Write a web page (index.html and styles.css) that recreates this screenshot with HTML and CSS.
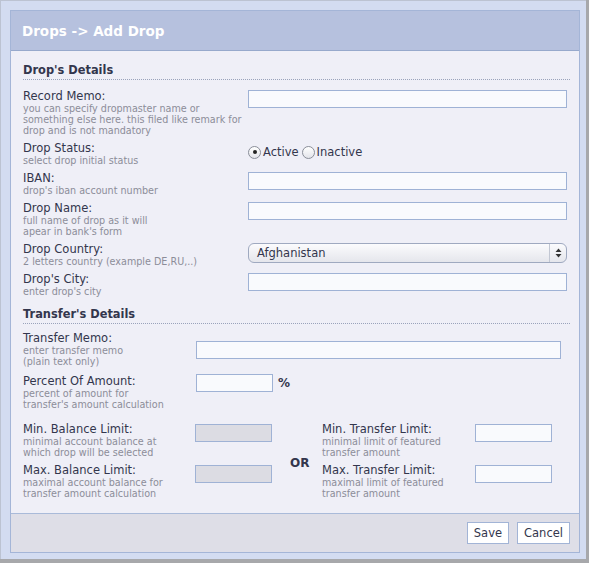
FILE: index.html
```html
<!DOCTYPE html>
<html>
<head>
    <link rel="stylesheet" href="styles.css">
</head>
<body>
<div class="frame">
    <div class="dialog">
        <div class="dialog__header">Drops -&gt; Add Drop</div>

        <div class="dialog__body">
            <div class="section-title">Drop's Details</div>

            <div class="drop-fields">
                <div class="field-row">
                    <div class="field-label">Record Memo:
                        <div class="field-hint">you can specify dropmaster name or<br>something else here. this filed like remark for<br>drop and is not mandatory</div>
                    </div>
                    <input class="text-input text-input--wide" type="text">
                </div>
                <div class="field-row">
                    <div class="field-label">Drop Status:
                        <div class="field-hint">select drop initial status</div>
                    </div>
                    <div class="radio-group">
                        <label class="radio"><span class="radio__dot checked"></span>Active</label>
                        <label class="radio"><span class="radio__dot"></span>Inactive</label>
                    </div>
                </div>
                <div class="field-row">
                    <div class="field-label">IBAN:
                        <div class="field-hint">drop's iban account number</div>
                    </div>
                    <input class="text-input text-input--wide" type="text">
                </div>
                <div class="field-row">
                    <div class="field-label">Drop Name:
                        <div class="field-hint">full name of drop as it will<br>apear in bank's form</div>
                    </div>
                    <input class="text-input text-input--wide" type="text">
                </div>
                <div class="field-row">
                    <div class="field-label">Drop Country:
                        <div class="field-hint">2 letters country (example DE,RU,..)</div>
                    </div>
                    <div class="select">
                        <span class="select__value">Afghanistan</span>
                        <span class="select__arrows">
                            <svg width="7" height="10" viewBox="0 0 7 10"><path d="M3.5 0.5 L6.5 4 L0.5 4 Z M0.5 6 L6.5 6 L3.5 9.5 Z" fill="#333"/></svg>
                        </span>
                    </div>
                </div>
                <div class="field-row">
                    <div class="field-label">Drop's City:
                        <div class="field-hint">enter drop's city</div>
                    </div>
                    <input class="text-input text-input--wide" type="text">
                </div>
            </div>

            <div class="section-title section-title--second">Transfer's Details</div>

            <div class="transfer-fields">
                <div class="field-row">
                    <div class="field-label">Transfer Memo:
                        <div class="field-hint">enter transfer memo<br>(plain text only)</div>
                    </div>
                    <input class="text-input text-input--memo" type="text">
                </div>
                <div class="field-row field-row--top">
                    <div class="field-label">Percent Of Amount:
                        <div class="field-hint">percent of amount for<br>transfer's amount calculation</div>
                    </div>
                    <div class="percent">
                        <input class="text-input text-input--small" type="text">
                        <span class="percent__sign">%</span>
                    </div>
                </div>
            </div>

            <div class="limits">
                <div class="field-label">Min. Balance Limit:
                    <div class="field-hint">minimal account balance at<br>which drop will be selected</div>
                </div>
                <input class="text-input text-input--small" type="text" disabled>
                <div class="limits__or">OR</div>
                <div class="field-label">Min. Transfer Limit:
                    <div class="field-hint">minimal limit of featured<br>transfer amount</div>
                </div>
                <input class="text-input text-input--small" type="text">

                <div class="field-label">Max. Balance Limit:
                    <div class="field-hint">maximal account balance for<br>transfer amount calculation</div>
                </div>
                <input class="text-input text-input--small" type="text" disabled>
                <div class="field-label">Max. Transfer Limit:
                    <div class="field-hint">maximal limit of featured<br>transfer amount</div>
                </div>
                <input class="text-input text-input--small" type="text">
            </div>
        </div>

        <div class="dialog__footer">
            <button class="button">Save</button>
            <button class="button">Cancel</button>
        </div>
    </div>
</div>
</body>
</html>
```

FILE: styles.css
```css
html, body {
    margin: 0;
    background-color: #a7a8ab;
    font-family: "DejaVu Sans", Verdana, sans-serif;
    color: #33364d;
}

.frame {
    width: 570px;
    height: 543px;
    padding: 9px 6px 6px 9px;
    background-color: #d3dcf1;
    border-top: 1px solid #bcc3d2;
    border-left: 1px solid #bcc3d2;
}

.dialog {
    box-sizing: border-box;
    height: 543px;
    border: 1px solid #a4b5d7;
    background-color: #efeff7;
    display: flex;
    flex-direction: column;
}

.dialog__header {
    height: 39px;
    line-height: 40px;
    padding-left: 11px;
    background-color: #b6c1de;
    border-bottom: 1px solid #97a9cc;
    color: #ffffff;
    font-size: 13.5px;
    font-weight: bold;
}

.dialog__body {
    flex: 1;
    padding: 12px 9px 0 12px;
}

.section-title {
    font-size: 11.4px;
    font-weight: bold;
    line-height: 14px;
    padding-bottom: 2px;
    border-bottom: 1px dotted #9aa3bb;
    margin-bottom: 9px;
}

.section-title--second {
    margin-top: 10px;
    margin-bottom: 7px;
}

.field-row {
    display: flex;
    align-items: flex-start;
    margin-bottom: 5px;
}

.field-label {
    font-size: 11.5px;
    line-height: 14px;
    color: #33364d;
}

.field-hint {
    font-size: 9.6px;
    line-height: 11px;
    color: #8c8d99;
}

.drop-fields .field-label {
    width: 225px;
}

.drop-fields .field-row .text-input,
.drop-fields .field-row .select,
.drop-fields .field-row .radio-group {
    margin-top: 1px;
}

.transfer-fields .field-label {
    width: 173px;
}

.transfer-fields .field-row {
    align-items: center;
    margin-bottom: 7px;
}

.transfer-fields .field-row--top {
    align-items: flex-start;
}

.text-input {
    box-sizing: border-box;
    height: 18px;
    margin: 0;
    border: 1px solid #9fb2d5;
    background-color: #f9fafd;
    font-family: inherit;
    font-size: 12px;
}

.text-input--wide {
    width: 319px;
}

.text-input--memo {
    width: 365px;
    margin-top: 2px;
}

.text-input--small {
    width: 77px;
}

.text-input:disabled {
    background-color: #dcdce3;
}

.radio-group {
    display: flex;
    align-items: center;
    height: 20px;
    font-size: 11.5px;
}

.radio {
    display: flex;
    align-items: center;
    margin-right: 3px;
}

.radio__dot {
    box-sizing: border-box;
    width: 13px;
    height: 13px;
    margin-right: 2px;
    border: 1px solid #8a8e99;
    border-radius: 50%;
    background: linear-gradient(#ffffff, #e3e4ea);
    position: relative;
}

.radio__dot.checked::after {
    content: "";
    position: absolute;
    left: 3.5px;
    top: 3.5px;
    width: 4px;
    height: 4px;
    border-radius: 50%;
    background-color: #222222;
}

.select {
    box-sizing: border-box;
    display: flex;
    align-items: center;
    width: 319px;
    height: 20px;
    border: 1px solid #9fa9c0;
    border-radius: 6px;
    background: linear-gradient(#fbfbfd, #e5e6ec);
    font-size: 11.5px;
}

.select__value {
    flex: 1;
    padding-left: 8px;
}

.select__arrows {
    display: flex;
    align-items: center;
    justify-content: center;
    width: 16px;
    height: 100%;
    border-left: 1px solid #c2c7d3;
}

.percent {
    display: flex;
    align-items: center;
}

.percent__sign {
    margin-left: 5px;
    font-size: 12px;
    font-weight: bold;
}

.limits {
    display: grid;
    grid-template-columns: 172px 76px 51px 153px 76px;
    row-gap: 5px;
    margin-top: 12px;
}

.limits .text-input {
    margin-top: 2px;
}

.limits__or {
    grid-row: 1 / span 2;
    grid-column: 3;
    align-self: center;
    padding-left: 19px;
    padding-top: 4px;
    font-size: 12px;
    font-weight: bold;
}

.dialog__footer {
    height: 38px;
    display: flex;
    justify-content: flex-end;
    align-items: center;
    gap: 8px;
    padding-right: 9px;
    background-color: #dedee7;
    border-top: 1px solid #a9bad9;
}

.button {
    height: 22px;
    padding: 0 6px;
    border: 1px solid #a2b4d6;
    background-color: #ffffff;
    color: #33364d;
    font-family: inherit;
    font-size: 11.5px;
}
```
